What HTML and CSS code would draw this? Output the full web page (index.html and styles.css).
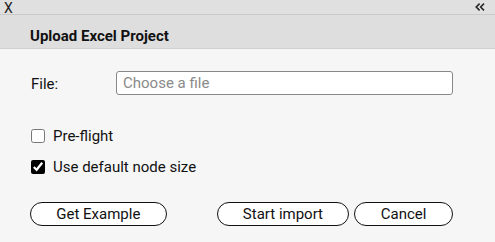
FILE: index.html
```html
<!DOCTYPE html>
<html lang="en">
<head>
    <meta charset="UTF-8">
    <title>Upload Excel Project</title>
    <link rel="stylesheet" href="styles.css">
</head>
<body>
    <div id="panel">
        <div class="topbar">
            <span class="close">X</span>
            <svg class="collapse" width="10" height="8" viewBox="0 0 10 8" aria-label="collapse">
                <path d="M4.6 0.6 L1.2 4 L4.6 7.4 M9 0.6 L5.6 4 L9 7.4" fill="none" stroke="#222" stroke-width="1.5"/>
            </svg>
        </div>
        <div class="header">Upload Excel Project</div>
        <div class="content">
            <div class="row file-row">
                <label for="file">File:</label>
                <input id="file" type="text" placeholder="Choose a file">
            </div>
            <div class="checks">
                <label class="check"><input type="checkbox"> Pre-flight</label>
                <label class="check"><input type="checkbox" checked> Use default node size</label>
            </div>
            <div class="buttons">
                <button class="btn example">Get Example</button>
                <button class="btn start">Start import</button>
                <button class="btn cancel">Cancel</button>
            </div>
        </div>
    </div>
</body>
</html>
```

FILE: styles.css
```css
html, body {
    margin: 0;
    padding: 0;
}
body {
    font-family: Roboto, "Liberation Sans", sans-serif;
    font-size: 15px;
    color: #111;
    background: #f6f6f6;
}
#panel {
    display: flex;
    flex-direction: column;
    height: 242px;
}
.topbar {
    display: flex;
    justify-content: space-between;
    align-items: flex-start;
    height: 14px;
    padding: 0 10px 0 4px;
    background: #e0e0e0;
    border-bottom: 1px solid #c9c9c9;
    font-size: 14px;
    line-height: 16px;
    color: #222;
}
.close {
    height: 14px;
}
.collapse {
    display: block;
    margin-top: 3px;
}
.header {
    height: 25px;
    padding-top: 8px;
    line-height: 27px;
    padding-left: 30px;
    background: #dedede;
    border-bottom: 1px solid #d0d0d0;
    font-weight: bold;
    color: #111;
}
.content {
    flex: 1;
    display: flex;
    flex-direction: column;
    padding: 22px 42px 0 31px;
    background: #f6f6f6;
}
.file-row {
    display: flex;
    align-items: center;
}
.file-row label {
    width: 85px;
    padding-top: 1px;
}
.file-row input {
    flex: 1;
    height: 22px;
    margin: 0;
    padding: 0 6px;
    border: 1px solid #888;
    border-radius: 3px;
    background: #fff;
    font: inherit;
    color: #111;
}
.file-row input::placeholder {
    color: #8a8a8a;
}
.checks {
    display: flex;
    flex-direction: column;
    gap: 9px;
    margin-top: 30px;
}
.check {
    display: flex;
    align-items: center;
    height: 22px;
}
.check input {
    width: 14px;
    height: 14px;
    margin: 0 8px 0 0;
    accent-color: #000;
}
.buttons {
    display: flex;
    margin-top: 24px;
    margin-left: -1px;
}
.btn {
    height: 24px;
    padding: 0;
    border: 1px solid #111;
    border-radius: 12px;
    background: #fff;
    font: inherit;
    color: #111;
}
.example {
    width: 137px;
}
.start {
    width: 133px;
    margin-left: 50px;
}
.cancel {
    width: 99px;
    margin-left: 5px;
}
```
